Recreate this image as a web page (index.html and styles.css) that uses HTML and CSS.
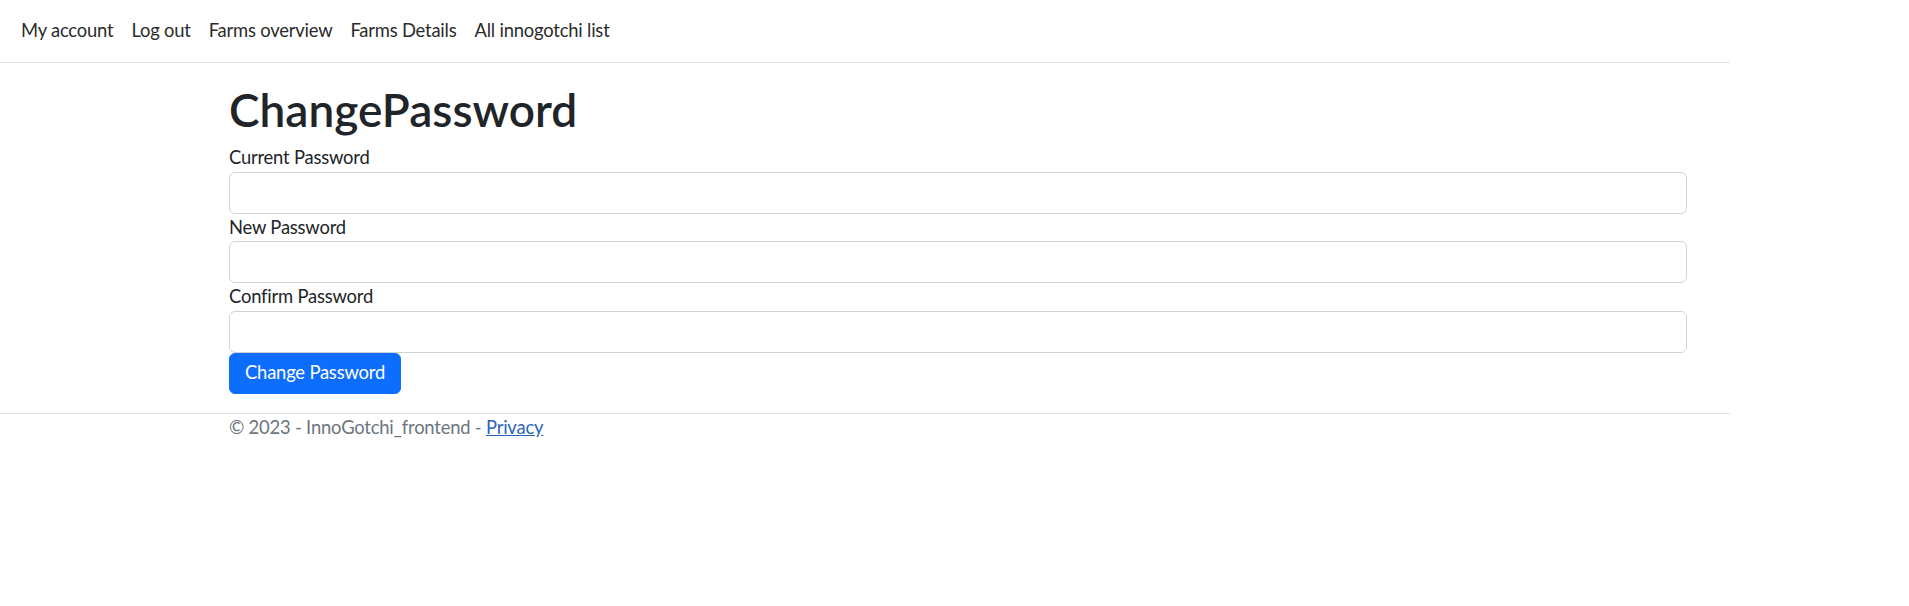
FILE: index.html
```html
<!DOCTYPE html>
<html lang="en">
<head>
<meta charset="utf-8">
<title>ChangePassword - InnoGotchi_frontend</title>
<link rel="stylesheet" href="styles.css">
</head>
<body>
<div class="page">
  <header class="topbar">
    <nav>
      <ul class="nav-list">
        <li><a class="nav-link" href="#">My account</a></li>
        <li><a class="nav-link" href="#">Log out</a></li>
        <li><a class="nav-link" href="#">Farms overview</a></li>
        <li><a class="nav-link" href="#">Farms Details</a></li>
        <li><a class="nav-link" href="#">All innogotchi list</a></li>
      </ul>
    </nav>
  </header>
  <main class="container">
    <h1 class="title">ChangePassword</h1>
    <form class="form">
      <label class="label" for="cur">Current Password</label>
      <input class="input" id="cur" type="password">
      <label class="label" for="new">New Password</label>
      <input class="input" id="new" type="password">
      <label class="label" for="conf">Confirm Password</label>
      <input class="input" id="conf" type="password">
      <button class="btn" type="button">Change Password</button>
    </form>
  </main>
  <footer class="footer">
    <div class="footer-inner">© 2023 - InnoGotchi_frontend - <a class="footer-link" href="#">Privacy</a></div>
  </footer>
</div>
</body>
</html>
```

FILE: styles.css
```css
html, body {
  margin: 0;
  padding: 0;
  background: #fff;
}
body {
  font-family: Lato, "Noto Sans", sans-serif;
  font-size: 18.4px;
  letter-spacing: -0.2px;
  color: #212529;
}
.page {
  width: 1730px;
}
.topbar {
  height: 62px;
  border-bottom: 1px solid #dee2e6;
  box-sizing: content-box;
}
.nav-list {
  list-style: none;
  margin: 0;
  padding: 17px 0 0 12px;
  display: flex;
}
.nav-link {
  display: block;
  padding: 0 9px;
  line-height: 27.6px;
  color: #2b2b2b;
  text-decoration: none;
}
.container {
  margin-top: 19px;
  padding-left: 229px;
  width: 1458px;
}
.title {
  margin: 0 0 7px;
  font-size: 46px;
  font-weight: 600;
  line-height: 55px;
  letter-spacing: 0;
  color: #212529;
}
.form {
  display: flex;
  flex-direction: column;
  align-items: flex-start;
}
.label {
  display: block;
  line-height: 27.6px;
}
.input {
  display: block;
  width: 100%;
  height: 42px;
  box-sizing: border-box;
  margin: 0;
  border: 1px solid #ced4da;
  border-radius: 6px;
  background: #fff;
  font: inherit;
}
.btn {
  height: 41px;
  margin: 0;
  padding: 0 15px;
  border: 1px solid #0d6efd;
  border-radius: 6px;
  background: #0d6efd;
  color: #fff;
  font: inherit;
  letter-spacing: -0.2px;
  line-height: 27.6px;
}
.footer {
  margin-top: 19px;
  border-top: 1px solid #dee2e6;
}
.footer-inner {
  padding-left: 229px;
  padding-top: 1px;
  line-height: 24px;
  color: #6c757d;
}
.footer-link {
  color: #2e64b8;
}
```
